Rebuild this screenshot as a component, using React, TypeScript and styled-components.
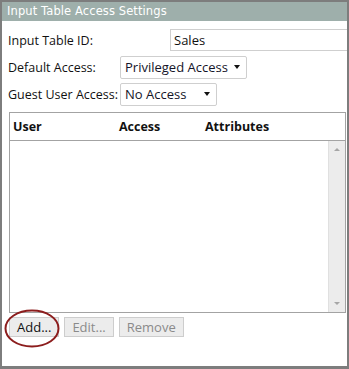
import React from 'react';
import styled, { createGlobalStyle } from 'styled-components';

const GlobalStyle = createGlobalStyle`
  body {
    margin: 0;
    background: #fff;
  }
`;

type Column = { title: string; width: number };

const columns: Column[] = [
  { title: 'User', width: 106 },
  { title: 'Access', width: 86 },
  { title: 'Attributes', width: 120 },
];

const SelectBox = ({ value, width }: { value: string; width: number }) => (
  <Select width={width}>
    <span>{value}</span>
    <Caret />
  </Select>
);

const App = () => {
  return (
    <>
      <GlobalStyle />
      <Panel>
        <Header>Input Table Access Settings</Header>
        <Body>
          <Row>
            <Label width={162}>Input Table ID:</Label>
            <TextInput>Sales</TextInput>
          </Row>
          <Row>
            <Label width={112}>Default Access:</Label>
            <SelectBox value="Privileged Access" width={127} />
          </Row>
          <Row>
            <Label width={112}>Guest User Access:</Label>
            <SelectBox value="No Access" width={97} />
          </Row>

          <Table>
            <HeadRow>
              {columns.map((col) => (
                <HeadCell key={col.title} width={col.width}>
                  {col.title}
                </HeadCell>
              ))}
            </HeadRow>
            <TableBody>
              <Rows />
              <Scrollbar>
                <Arrow up />
                <Arrow />
              </Scrollbar>
            </TableBody>
          </Table>

          <Buttons>
            <AddWrap>
              <Button>Add...</Button>
              <Circle width="56" height="39" viewBox="0 0 56 39">
                <ellipse cx="28" cy="19.5" rx="26.5" ry="18" fill="none" stroke="#8c1d1d" strokeWidth="2" />
              </Circle>
            </AddWrap>
            <Button disabled>Edit...</Button>
            <Button disabled>Remove</Button>
          </Buttons>
        </Body>
      </Panel>
    </>
  );
};

const Panel = styled.div`
  width: 349px;
  height: 369px;
  box-sizing: border-box;
  border: 2px solid #7d7d7d;
  border-bottom-width: 3px;
  background: #fff;
  display: flex;
  flex-direction: column;
  overflow: hidden;
  font-family: 'Open Sans', 'Noto Sans', sans-serif;
  font-size: 12.5px;
  color: #111;
`;

const Header = styled.div`
  height: 19px;
  line-height: 19px;
  padding-left: 5px;
  background: #9eafab;
  color: #fff;
  font-family: 'DejaVu Sans', sans-serif;
  font-size: 11.5px;
  letter-spacing: 0.1px;
`;

const Body = styled.div`
  display: flex;
  flex-direction: column;
  padding: 8px 0 0 6px;
`;

const Row = styled.div`
  display: flex;
  align-items: center;
  height: 22px;
  margin-bottom: 5px;
`;

const Label = styled.div<{ width: number }>`
  width: ${(props) => props.width}px;
  flex-shrink: 0;
`;

const TextInput = styled.div`
  flex: 1;
  height: 22px;
  box-sizing: border-box;
  border: 1px solid #cfcfcf;
  border-right: none;
  padding-left: 3px;
  display: flex;
  align-items: center;
  font-size: 13px;
`;

const Select = styled.div<{ width: number }>`
  width: ${(props) => props.width}px;
  height: 23px;
  box-sizing: border-box;
  border: 1px solid #cfcfcf;
  border-radius: 2px;
  padding: 0 6px 0 4px;
  display: flex;
  align-items: center;
  justify-content: space-between;
  font-size: 13px;
  color: #141428;
`;

const Caret = styled.span`
  width: 0;
  height: 0;
  border-left: 3.5px solid transparent;
  border-right: 3.5px solid transparent;
  border-top: 4px solid #111;
`;

const Table = styled.div`
  width: 337px;
  height: 201px;
  box-sizing: border-box;
  margin-top: 2px;
  margin-left: 1px;
  border: 1px solid #a3a3a3;
  display: flex;
  flex-direction: column;
`;

const HeadRow = styled.div`
  height: 27px;
  flex-shrink: 0;
  border-bottom: 1px solid #a3a3a3;
  display: flex;
  align-items: center;
  padding-left: 3px;
`;

const HeadCell = styled.div<{ width: number }>`
  width: ${(props) => props.width}px;
  font-weight: 700;
  font-size: 12.5px;
`;

const TableBody = styled.div`
  flex: 1;
  display: flex;
`;

const Rows = styled.div`
  flex: 1;
`;

const Scrollbar = styled.div`
  width: 16px;
  background: #ececec;
  border-left: 1px solid #e0e0e0;
  display: flex;
  flex-direction: column;
  justify-content: space-between;
  align-items: center;
  padding: 7px 0;
`;

const Arrow = styled.span<{ up?: boolean }>`
  width: 0;
  height: 0;
  border-left: 3.5px solid transparent;
  border-right: 3.5px solid transparent;
  ${(props) =>
    props.up ? 'border-bottom: 3px solid #a6a6a6;' : 'border-top: 3px solid #a6a6a6;'}
`;

const Buttons = styled.div`
  display: flex;
  gap: 5px;
  margin-top: 4px;
  margin-left: 1px;
`;

const AddWrap = styled.div`
  position: relative;
  display: flex;
`;

const Button = styled.button`
  height: 20px;
  padding: 0 7px;
  background: #ececec;
  border: 1px solid #cdcdcd;
  border-radius: 0;
  font-family: 'Open Sans', 'Noto Sans', sans-serif;
  font-size: 13px;
  line-height: 18px;
  color: #111;

  &:disabled {
    color: #8a8a8a;
  }
`;

const Circle = styled.svg`
  position: absolute;
  left: -5px;
  top: -8px;
  pointer-events: none;
`;

export default App;
